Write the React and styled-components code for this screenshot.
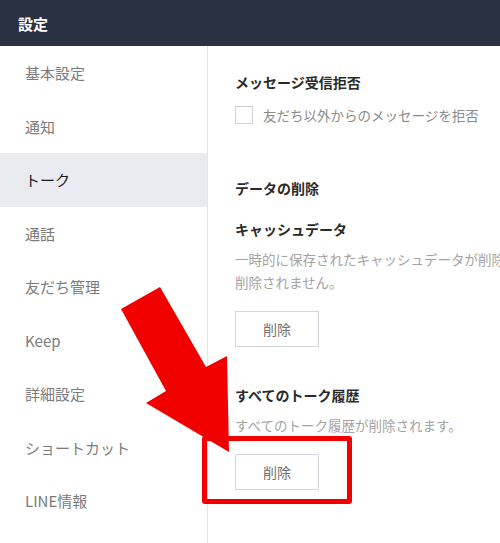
import React from 'react';
import styled, { createGlobalStyle } from 'styled-components';

const GlobalStyle = createGlobalStyle`
  html, body {
    margin: 0;
    padding: 0;
    background: #ffffff;
  }
  body {
    font-family: "Noto Sans CJK JP", "Noto Sans", sans-serif;
    overflow: hidden;
  }
`;

const navItems = ['基本設定', '通知', 'トーク', '通話', '友だち管理', 'Keep', '詳細設定', 'ショートカット', 'LINE情報'];

export default function App() {
    return (
        <>
            <GlobalStyle />
            <Page>
                <TitleBar>設定</TitleBar>
                <Body>
                    <Sidebar>
                        {navItems.map((item) => (
                            <NavItem key={item} $active={item === 'トーク'}>{item}</NavItem>
                        ))}
                    </Sidebar>
                    <Content>
                        <Heading $mt={26}>メッセージ受信拒否</Heading>
                        <CheckRow>
                            <CheckBox />
                            <CheckLabel>友だち以外からのメッセージを拒否</CheckLabel>
                        </CheckRow>
                        <Heading $mt={53}>データの削除</Heading>
                        <Heading $mt={21}>キャッシュデータ</Heading>
                        <Desc>
                            一時的に保存されたキャッシュデータが削除されます。トーク履歴は<br />
                            削除されません。
                        </Desc>
                        <DeleteButton>削除</DeleteButton>
                        <Heading $mt={38}>すべてのトーク履歴</Heading>
                        <Desc>すべてのトーク履歴が削除されます。</Desc>
                        <DeleteButton>削除</DeleteButton>
                    </Content>
                </Body>

                {/* annotation overlays */}
                <RedFrame />
                <Arrow viewBox="0 0 500 543" width="500" height="543">
                    <polygon
                        points="121,309 160,287 206,367 227,356 229,452 146,403 166,391"
                        fill="#f20000"
                    />
                </Arrow>
            </Page>
        </>
    );
}

const Page = styled.div`
  position: relative;
  width: 500px;
  height: 543px;
  overflow: hidden;
  background: #ffffff;
`;

const TitleBar = styled.div`
  height: 46px;
  box-sizing: border-box;
  padding-left: 18px;
  display: flex;
  align-items: center;
  background: #2a3142;
  color: #ffffff;
  font-size: 15px;
  font-weight: 700;
`;

const Body = styled.div`
  display: flex;
  height: 497px;
`;

const Sidebar = styled.div`
  width: 207px;
  flex-shrink: 0;
  border-right: 1px solid #e4e5e8;
  display: flex;
  flex-direction: column;
`;

const NavItem = styled.div`
  height: 53.5px;
  flex-shrink: 0;
  display: flex;
  align-items: center;
  padding-left: 25px;
  font-size: 15px;
  color: ${(p) => (p.$active ? '#1c1c1c' : '#7b7b7b')};
  background: ${(p) => (p.$active ? '#e9ebf0' : 'transparent')};
`;

const Content = styled.div`
  flex: 1;
  min-width: 0;
  padding-left: 27px;
  display: flex;
  flex-direction: column;
  align-items: flex-start;
  white-space: nowrap;
  overflow: hidden;
`;

const Heading = styled.div`
  margin-top: ${(p) => p.$mt}px;
  font-size: 14px;
  line-height: 20px;
  font-weight: 700;
  color: #2a2a2a;
`;

const CheckRow = styled.div`
  margin-top: 13px;
  display: flex;
  align-items: center;
  gap: 10px;
  height: 20px;
`;

const CheckBox = styled.span`
  width: 16px;
  height: 16px;
  border: 1px solid #cfd1d6;
  background: #ffffff;
  display: inline-block;
`;

const CheckLabel = styled.span`
  font-size: 13.5px;
  color: #8a8a8a;
`;

const Desc = styled.div`
  margin-top: 9px;
  font-size: 13.5px;
  line-height: 23px;
  color: #a3a3a3;
`;

const DeleteButton = styled.button`
  margin-top: 17px;
  width: 84px;
  height: 36px;
  box-sizing: border-box;
  border: 1px solid #d3d6dc;
  background: #ffffff;
  color: #707070;
  font-family: inherit;
  font-size: 14px;
  padding: 0;
`;

const RedFrame = styled.div`
  position: absolute;
  left: 202px;
  top: 436px;
  width: 150px;
  height: 68px;
  box-sizing: border-box;
  border: 5px solid #f20000;
  border-radius: 3px;
  pointer-events: none;
`;

const Arrow = styled.svg`
  position: absolute;
  left: 0;
  top: 0;
  pointer-events: none;
`;
